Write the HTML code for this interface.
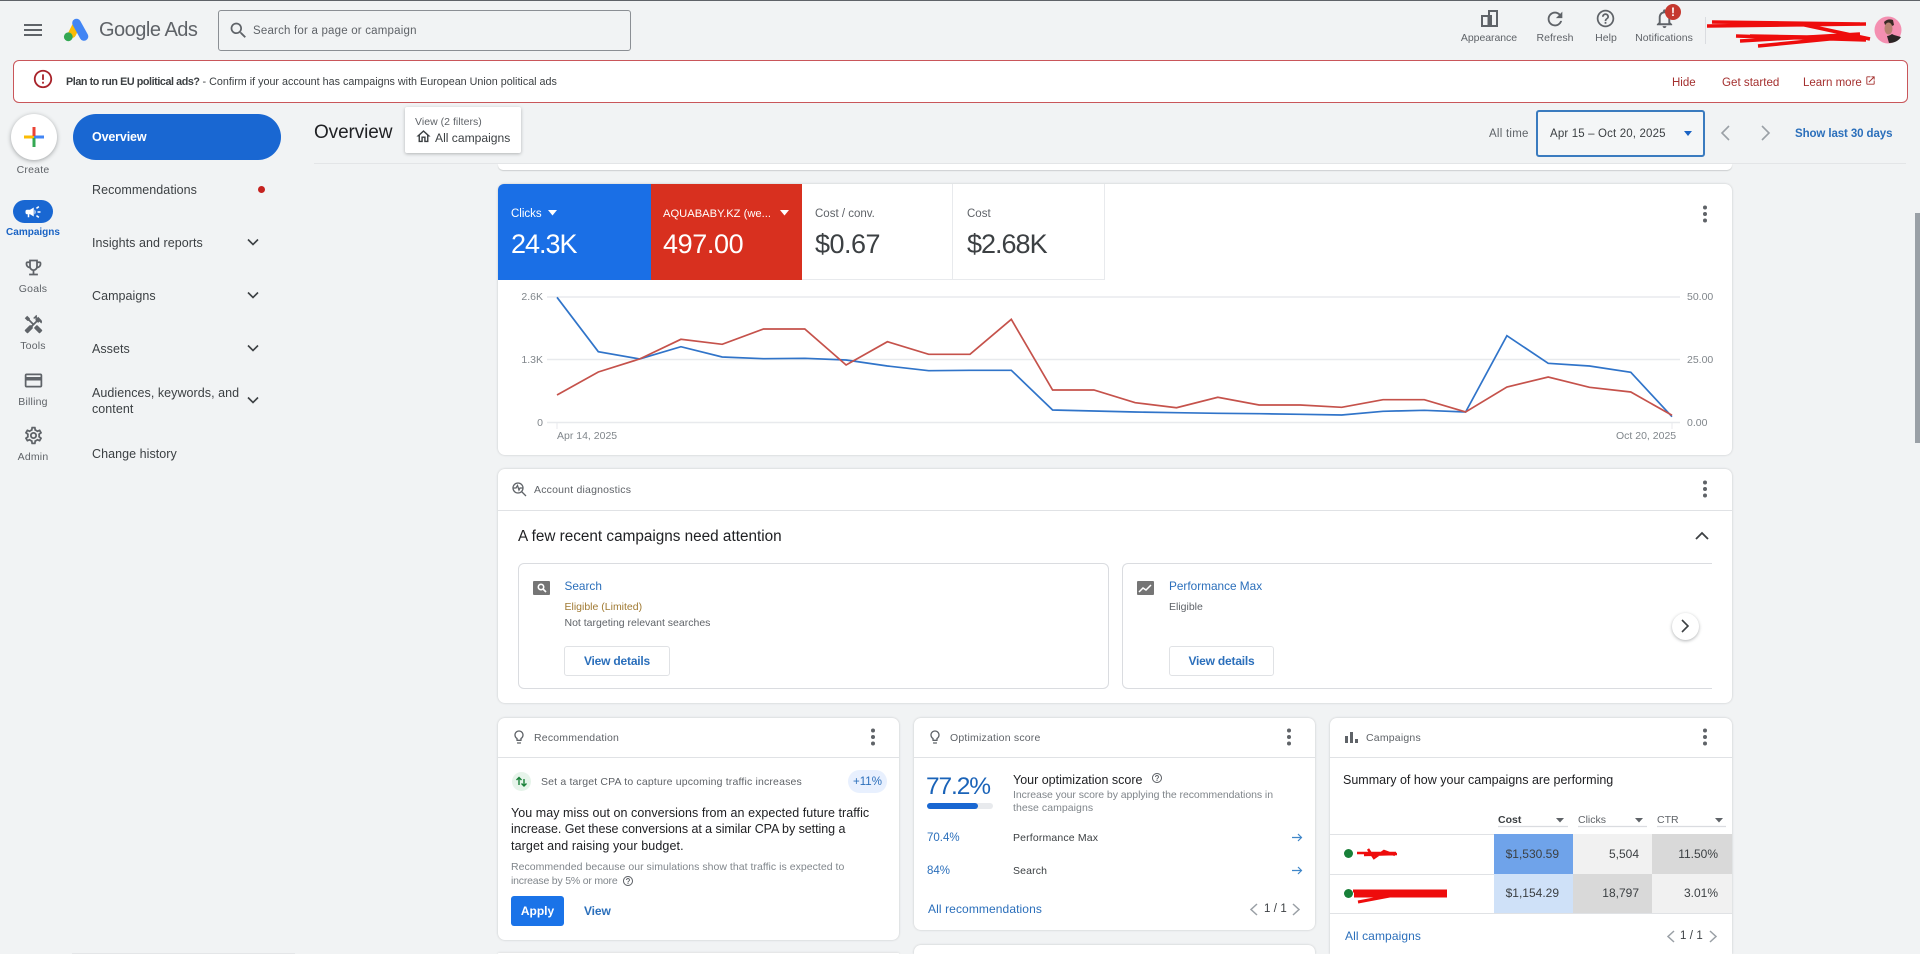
<!DOCTYPE html>
<html><head><meta charset="utf-8"><title>Google Ads</title>
<style>
html,body{margin:0;padding:0;width:1920px;height:954px;overflow:hidden;background:#f1f3f4;font-family:"Liberation Sans",Arial,sans-serif;color:#3c4043}
#w{position:absolute;left:0;top:0;width:1920px;height:954px;overflow:hidden;background:#f1f3f4;filter:blur(.3px)}
.t{position:absolute;white-space:nowrap;height:20px;line-height:20px}
.b{position:absolute;box-sizing:border-box}
svg{position:absolute;overflow:visible}
.card{position:absolute;box-sizing:border-box;background:#fff;border-radius:7px;box-shadow:0 0 2px rgba(60,64,67,.25)}
.rail{font-size:10.5px;color:#5f6368;text-align:center;width:66px;left:0;letter-spacing:.2px;margin-top:1px}
.nav{font-size:12.5px;left:92px;color:#3c4043;letter-spacing:.05px;margin-top:.5px}
.top{font-size:10.5px;color:#5f6368;text-align:center;width:80px;letter-spacing:.05px}
.ax{font-size:10.5px;color:#80868b}
.lbl{font-size:11.5px;color:#5f6368}
.val{font-size:27px;letter-spacing:-1px;height:32px;line-height:32px}
.hd{font-size:10.5px;color:#5f6368;letter-spacing:.2px;margin-top:.5px}
.cell{position:absolute;box-sizing:border-box;text-align:right;font-size:12px;color:#3c4043;height:40px;line-height:40px}
.lnk{color:#2b6fbb}
</style></head><body><div id="w">
<div class="b" style="left:0;top:0;width:1920px;height:1px;background:#5f6368"></div>

<!-- header -->
<svg style="left:21px;top:18px" width="24" height="24" viewBox="0 0 24 24" fill="#5f6368"><path d="M3 18h18v-2H3v2zm0-5h18v-2H3v2zm0-7v2h18V6H3z"/></svg>
<svg style="left:0;top:0" width="100" height="50" fill="none" stroke-linecap="round">
<path d="M72 34 L76 26" stroke="#fbbc04" stroke-width="8"/>
<circle cx="68.3" cy="36.8" r="4.4" fill="#34a853"/>
<path d="M76.5 23 L84 36.5" stroke="#4285f4" stroke-width="8.6"/>
</svg>
<div class="t" style="left:99px;top:20px;font-size:20px;color:#5f6368;letter-spacing:-.5px">Google Ads</div>
<div class="b" style="left:218px;top:10px;width:413px;height:41px;border:1.5px solid #8b8f94;border-radius:3px"></div>
<svg style="left:228px;top:20px" width="21" height="21" viewBox="0 0 24 24" fill="#5f6368"><path d="M15.5 14h-.79l-.28-.27C15.41 12.59 16 11.11 16 9.5 16 5.91 13.09 3 9.5 3S3 5.91 3 9.5 5.91 16 9.5 16c1.61 0 3.09-.59 4.23-1.57l.27.28v.79l5 4.99L20.49 19l-4.99-5zm-6 0C7.01 14 5 11.99 5 9.5S7.01 5 9.5 5 14 7.01 14 9.5 11.99 14 9.5 14z"/></svg>
<div class="t" style="left:253px;top:21px;font-size:11.5px;color:#5f6368;letter-spacing:.2px">Search for a page or campaign</div>

<svg style="left:1479px;top:8px" width="21" height="21" viewBox="0 0 21 21" fill="none" stroke="#5f6368" stroke-width="2"><rect x="3" y="8" width="6.500" height="10"/><rect x="10" y="3" width="8" height="15"/><rect x="9" y="7" width="4" height="11" fill="#5f6368" stroke="none"/></svg>
<svg style="left:1544px;top:8px" width="22" height="22" viewBox="0 0 24 24" fill="#5f6368"><path d="M17.65 6.35C16.2 4.9 14.21 4 12 4c-4.42 0-7.99 3.58-7.99 8s3.57 8 7.99 8c3.73 0 6.84-2.55 7.73-6h-2.08c-.82 2.33-3.04 4-5.65 4-3.31 0-6-2.69-6-6s2.69-6 6-6c1.66 0 3.14.69 4.22 1.78L13 11h7V4l-2.35 2.35z"/></svg>
<svg style="left:1595px;top:8px" width="21" height="21" viewBox="0 0 24 24" fill="#5f6368"><path d="M11 18h2v-2h-2v2zm1-16C6.48 2 2 6.48 2 12s4.48 10 10 10 10-4.48 10-10S17.52 2 12 2zm0 18c-4.41 0-8-3.59-8-8s3.59-8 8-8 8 3.59 8 8-3.59 8-8 8zm0-14c-2.21 0-4 1.79-4 4h2c0-1.1.9-2 2-2s2 .9 2 2c0 2-3 1.75-3 5h2c0-2.25 3-2.5 3-5 0-2.21-1.79-4-4-4z"/></svg>
<svg style="left:1653px;top:7px" width="23" height="23" viewBox="0 0 24 24" fill="#5f6368"><path d="M12 22c1.1 0 2-.9 2-2h-4c0 1.1.9 2 2 2zm6-6v-5c0-3.07-1.63-5.64-4.5-6.32V4c0-.83-.67-1.5-1.5-1.5s-1.5.67-1.5 1.5v.68C7.64 5.36 6 7.92 6 11v5l-2 2v1h16v-1l-2-2zm-2 1H8v-6c0-2.48 1.51-4.5 4-4.5s4 2.02 4 4.5v6z"/></svg>
<div class="b" style="left:1665px;top:4px;width:16px;height:16px;border-radius:50%;background:#c5392f;color:#fff;font-size:12px;font-weight:bold;text-align:center;line-height:16px">!</div>
<div class="t top" style="left:1449px;top:28px;letter-spacing:-.05px">Appearance</div>
<div class="t top" style="left:1515px;top:28px">Refresh</div>
<div class="t top" style="left:1566px;top:28px">Help</div>
<div class="t top" style="left:1624px;top:28px">Notifications</div>
<div class="b" style="left:1705px;top:17px;width:1px;height:27px;background:#dadce0"></div>
<svg style="left:0;top:0" width="1920" height="60" fill="none" stroke="#ee0c0c" stroke-width="3.500">
<path d="M1707 26 L1866 24 M1712 22 L1860 24 M1800 24 L1870 39 M1736 36 L1866 40 M1740 41 L1860 34 M1758 46 L1850 37 M1750 36 L1866 38" />
</svg>
<svg style="left:1874px;top:16px" width="28" height="28" viewBox="0 0 28 28"><ellipse cx="14" cy="14" rx="13.500" ry="13.500" fill="#f48fb1"/><path d="M13 20 Q15 20 18 18 L20 19 L27 21 Q23 27 15 27 Z" fill="#2b2424"/><path d="M10 6 Q14 2 19 4 L20 9 L18 10 Q14 7 11 9 Z" fill="#3a2a26"/><ellipse cx="14.500" cy="12.500" rx="4" ry="6" fill="#b98272"/></svg>

<!-- banner -->
<div class="b" style="left:13px;top:60px;width:1895px;height:43px;background:#fff;border:1px solid #c9565a;border-radius:6px"></div>
<svg style="left:32px;top:68px" width="22" height="22" viewBox="0 0 24 24" fill="#a8232a"><path d="M11 15h2v2h-2zm0-8h2v6h-2zm.99-5C6.47 2 2 6.48 2 12s4.47 10 9.99 10C17.52 22 22 17.52 22 12S17.52 2 11.99 2zM12 20c-4.42 0-8-3.58-8-8s3.58-8 8-8 8 3.58 8 8-3.58 8-8 8z"/></svg>
<div class="t" style="left:66px;top:71.500px;font-size:10.750px;color:#3c4043"><span style="font-weight:bold;letter-spacing:-.42px">Plan to run EU political ads?</span> - Confirm if your account has campaigns with European Union political ads</div>
<div class="t" style="left:1672px;top:72.500px;font-size:11.500px;color:#a4302f">Hide</div>
<div class="t" style="left:1722px;top:72.500px;font-size:11.600px;color:#a4302f">Get started</div>
<div class="t" style="left:1803px;top:72.500px;font-size:11.500px;color:#a4302f">Learn more</div>
<svg style="left:1865px;top:75px" width="11" height="11" viewBox="0 0 24 24" fill="#a4302f"><path d="M19 19H5V5h7V3H5c-1.11 0-2 .9-2 2v14c0 1.1.89 2 2 2h14c1.1 0 2-.9 2-2v-7h-2v7zM14 3v2h3.59l-9.83 9.83 1.41 1.41L19 6.41V10h2V3h-7z"/></svg>

<!-- rail -->
<div class="b" style="left:11px;top:114px;width:46px;height:46px;border-radius:50%;background:#fff;box-shadow:0 1px 4px rgba(60,64,67,.45)"></div>
<svg style="left:24px;top:127px" width="20" height="20"><rect x="0" y="8.500" width="10" height="3" fill="#fbbc04"/><rect x="10" y="8.500" width="10" height="3" fill="#4285f4"/><rect x="8.500" y="0" width="3" height="9" fill="#ea4335"/><rect x="8.500" y="11" width="3" height="9" fill="#34a853"/></svg>
<div class="t rail" style="top:159px">Create</div>
<div class="b" style="left:13px;top:200px;width:40px;height:23px;border-radius:12px;background:#1967d2"></div>
<svg style="left:24px;top:203px" width="18" height="18" viewBox="0 0 24 24" fill="#fff"><path d="M18 11v2h4v-2h-4zm-2 6.61c.96.71 2.21 1.65 3.2 2.39.4-.53.8-1.07 1.2-1.6-.99-.74-2.24-1.68-3.2-2.4-.4.54-.8 1.08-1.2 1.61zM20.4 5.6c-.4-.53-.8-1.07-1.2-1.6-.99.74-2.24 1.68-3.2 2.4.4.53.8 1.07 1.2 1.6.96-.72 2.21-1.65 3.2-2.4zM4 9c-1.1 0-2 .9-2 2v2c0 1.1.9 2 2 2h1v4h2v-4h1l5 3V6L8 9H4zm11.5 3c0-1.33-.58-2.53-1.5-3.35v6.69c.92-.81 1.5-2.01 1.5-3.34z"/></svg>
<div class="t rail" style="top:222px;color:#1a63c4;font-weight:bold;font-size:10px;letter-spacing:0">Campaigns</div>
<svg style="left:23px;top:257px" width="21" height="21" viewBox="0 0 24 24" fill="#5f6368"><path d="M19 5h-2V3H7v2H5c-1.1 0-2 .9-2 2v1c0 2.55 1.92 4.63 4.39 4.94.63 1.5 1.98 2.63 3.61 2.96V19H7v2h10v-2h-4v-3.1c1.63-.33 2.98-1.46 3.61-2.96C19.08 12.63 21 10.55 21 8V7c0-1.1-.9-2-2-2zM5 8V7h2v3.82C5.84 10.4 5 9.3 5 8zm7 6c-1.65 0-3-1.35-3-3V5h6v6c0 1.65-1.35 3-3 3zm7-6c0 1.3-.84 2.4-2 2.82V7h2v1z"/></svg>
<div class="t rail" style="top:278px">Goals</div>
<svg style="left:23px;top:314px" width="21" height="21" viewBox="0 0 24 24" fill="#5f6368"><path d="M21.67 18.17l-5.3-5.3h-.99l-2.54 2.54v.99l5.3 5.3c.39.39 1.02.39 1.41 0l2.12-2.12c.39-.38.39-1.02 0-1.41zM17.34 10.19l1.41-1.41 2.12 2.12c1.17-1.17 1.17-3.07 0-4.24l-3.54-3.54-1.41 1.41V1.71l-.7-.71-3.54 3.54.71.71h2.83l-1.41 1.41 1.06 1.06-2.89 2.89-4.13-4.13V5.06L4.83 2.04 2 4.87 5.03 7.9h1.41l4.13 4.13-.85.85H7.61l-5.3 5.3c-.39.39-.39 1.02 0 1.41l2.12 2.12c.39.39 1.02.39 1.41 0l5.3-5.3v-2.12l5.15-5.15 1.05 1.05z"/></svg>
<div class="t rail" style="top:335px">Tools</div>
<svg style="left:23px;top:370px" width="21" height="21" viewBox="0 0 24 24" fill="#5f6368"><path d="M20 4H4c-1.11 0-1.99.89-1.99 2L2 18c0 1.11.89 2 2 2h16c1.11 0 2-.89 2-2V6c0-1.11-.89-2-2-2zm0 14H4v-6h16v6zm0-10H4V6h16v2z"/></svg>
<div class="t rail" style="top:391px">Billing</div>
<svg style="left:23px;top:425px" width="21" height="21" viewBox="0 0 24 24" fill="#5f6368"><path d="M19.43 12.98c.04-.32.07-.64.07-.98 0-.34-.03-.66-.07-.98l2.11-1.65c.19-.15.24-.42.12-.64l-2-3.46c-.09-.16-.26-.25-.44-.25-.06 0-.12.01-.17.03l-2.49 1c-.52-.4-1.08-.73-1.69-.98l-.38-2.65C14.46 2.18 14.25 2 14 2h-4c-.25 0-.46.18-.49.42l-.38 2.65c-.61.25-1.17.59-1.69.98l-2.49-1c-.06-.02-.12-.03-.18-.03-.17 0-.34.09-.43.25l-2 3.46c-.13.22-.07.49.12.64l2.11 1.65c-.04.32-.07.65-.07.98 0 .33.03.66.07.98l-2.11 1.65c-.19.15-.24.42-.12.64l2 3.46c.09.16.26.25.44.25.06 0 .12-.01.17-.03l2.49-1c.52.4 1.08.73 1.69.98l.38 2.65c.03.24.24.42.49.42h4c.25 0 .46-.18.49-.42l.38-2.65c.61-.25 1.17-.59 1.69-.98l2.49 1c.06.02.12.03.18.03.17 0 .34-.09.43-.25l2-3.46c.12-.22.07-.49-.12-.64l-2.11-1.65zm-1.98-1.71c.04.31.05.52.05.73 0 .21-.02.43-.05.73l-.14 1.13.89.7 1.08.84-.7 1.21-1.27-.51-1.04-.42-.9.68c-.43.32-.84.56-1.25.73l-1.06.43-.16 1.13-.2 1.35h-1.4l-.19-1.35-.16-1.13-1.06-.43c-.43-.18-.83-.41-1.23-.71l-.91-.7-1.06.43-1.27.51-.7-1.21 1.08-.84.89-.7-.14-1.13c-.03-.31-.05-.54-.05-.74s.02-.43.05-.73l.14-1.13-.89-.7-1.08-.84.7-1.21 1.27.51 1.04.42.9-.68c.43-.32.84-.56 1.25-.73l1.06-.43.16-1.13.2-1.35h1.39l.19 1.35.16 1.13 1.06.43c.43.18.83.41 1.23.71l.91.7 1.06-.43 1.27-.51.7 1.21-1.07.85-.89.7.14 1.13zM12 8c-2.21 0-4 1.79-4 4s1.79 4 4 4 4-1.79 4-4-1.79-4-4-4zm0 6c-1.1 0-2-.9-2-2s.9-2 2-2 2 .9 2 2-.9 2-2 2z"/></svg>
<div class="t rail" style="top:446px">Admin</div>

<!-- nav -->
<div class="b" style="left:73px;top:114px;width:208px;height:46px;border-radius:23px;background:#1967d2"></div>
<div class="t nav" style="top:126px;color:#fff;font-weight:bold;letter-spacing:-.15px">Overview</div>
<div class="t nav" style="top:179px">Recommendations</div>
<div class="b" style="left:258px;top:186px;width:7px;height:7px;border-radius:50%;background:#c5221f"></div>
<div class="t nav" style="top:232px">Insights and reports</div>
<div class="t nav" style="top:285px">Campaigns</div>
<div class="t nav" style="top:338px">Assets</div>
<div class="t nav" style="top:382px">Audiences, keywords, and</div>
<div class="t nav" style="top:398px">content</div>
<div class="t nav" style="top:443px">Change history</div>
<svg style="left:0;top:0" width="300" height="420" fill="none" stroke="#3c4043" stroke-width="1.600"><path d="M248 239.500 L253 244.500 L258 239.500 M248 292.500 L253 297.500 L258 292.500 M248 345.500 L253 350.500 L258 345.500 M248 397.500 L253 402.500 L258 397.500"/></svg>
<div class="b" style="left:72px;top:953px;width:223px;height:1px;background:#e4e6e8"></div>

<!-- overview header -->
<div class="t" style="left:314px;top:123px;font-size:19px;letter-spacing:-.1px;color:#202124">Overview</div>
<div class="b" style="left:314px;top:163px;width:1592px;height:1px;background:#e3e5e7"></div>
<div class="b" style="left:405px;top:107px;width:116px;height:46px;background:#fff;border-radius:2px;box-shadow:0 1px 3px rgba(60,64,67,.35)"></div>
<div class="t" style="left:415px;top:112px;font-size:10.500px;color:#5f6368;letter-spacing:.03px">View (2 filters)</div>
<svg style="left:415px;top:128px" width="17" height="17" viewBox="0 0 24 24" fill="#3c4043"><path d="M12 5.690l5 4.500V18h-2v-6H9v6H7v-7.810l5-4.500M12 3L2 12h3v8h6v-6h2v6h6v-8h3L12 3z"/></svg>
<div class="t" style="left:435px;top:127.500px;font-size:12.100px;color:#3c4043">All campaigns</div>
<div class="t" style="left:1489px;top:123.500px;font-size:11.500px;color:#5f6368;letter-spacing:.25px">All time</div>
<div class="b" style="left:1536px;top:110px;width:169px;height:47px;border:2px solid #3a7bbf;border-radius:3px;background:#f4f6f7"></div>
<div class="t" style="left:1550px;top:123.500px;font-size:11.500px;color:#3c4043;letter-spacing:.15px">Apr 15 – Oct 20, 2025</div>
<svg style="left:1684px;top:131px" width="8" height="5"><path d="M0 0 H8 L4 5 Z" fill="#1a63c4"/></svg>
<svg style="left:0;top:100px" width="1800" height="60" fill="none" stroke="#9aa0a6" stroke-width="1.600"><path d="M1729 26 L1722 33 L1729 40 M1762 26 L1769 33 L1762 40"/></svg>
<div class="t lnk" style="left:1795px;top:123.500px;font-size:11.500px;font-weight:bold;letter-spacing:-.1px">Show last 30 days</div>

<!-- sliver card -->
<div class="b" style="left:498px;top:164px;width:1234px;height:6px;background:#fff;border-radius:0 0 5px 5px;box-shadow:0 1px 1px rgba(60,64,67,.2)"></div>

<!-- chart card -->
<div class="card" style="left:498px;top:184px;width:1234px;height:271px"></div>
<div class="b" style="left:498px;top:184px;width:153px;height:96px;background:#1a6fe6;border-radius:6px 0 0 0"></div>
<div class="b" style="left:651px;top:184px;width:151px;height:96px;background:#d8301f"></div>
<div class="b" style="left:802px;top:184px;width:151px;height:96px;border-right:1px solid #e8eaed;border-bottom:1px solid #e8eaed"></div>
<div class="b" style="left:953px;top:184px;width:152px;height:96px;border-right:1px solid #e8eaed;border-bottom:1px solid #e8eaed"></div>
<div class="t lbl" style="left:511px;top:203.500px;color:#fff">Clicks</div>
<svg style="left:548px;top:210px" width="9" height="6"><path d="M0 0H9L4.500 5.500Z" fill="#fff"/></svg>
<div class="t lbl" style="left:663px;top:203.500px;color:#fff;font-size:11.200px">AQUABABY.KZ (we...</div>
<svg style="left:780px;top:210px" width="9" height="6"><path d="M0 0H9L4.500 5.500Z" fill="#fff"/></svg>
<div class="t lbl" style="left:815px;top:203.500px">Cost / conv.</div>
<div class="t lbl" style="left:967px;top:203.500px">Cost</div>
<div class="t val" style="left:511px;top:228px;color:#fff">24.3K</div>
<div class="t val" style="left:663px;top:228px;color:#fff;letter-spacing:-.4px">497.00</div>
<div class="t val" style="left:815px;top:228px;color:#3c4043;letter-spacing:-.5px">$0.67</div>
<div class="t val" style="left:967px;top:228px;color:#3c4043">$2.68K</div>
<svg style="left:1696px;top:202px" width="18" height="24" fill="#5f6368"><circle cx="9" cy="5.500" r="2"/><circle cx="9" cy="12" r="2"/><circle cx="9" cy="18.500" r="2"/></svg>
<svg style="left:0;top:0" width="1920" height="460" fill="none">
<path d="M547 297H1680M547 359.500H1680M547 422.500H1680" stroke="#e8eaed" stroke-width="1.500"/>
<path d="M557 422V429M1672 422V429" stroke="#e8eaed"/>
<polyline stroke="#3074c9" stroke-width="1.700" points="557,297.300 598.300,351.700 639.600,359 680.900,346.700 722.200,357 763.500,358.700 804.800,358.300 846.100,360 887.400,366 928.700,370.700 970,370.300 1011.300,370.300 1052.600,410 1093.900,411 1135.200,412 1176.500,412.700 1217.800,413.300 1259.100,413.700 1300.400,414.300 1341.700,415 1383,411.300 1424.300,410.300 1465.600,412 1506.900,335.700 1548.200,363.300 1589.500,366 1630.800,372.300 1672,416.700"/>
<polyline stroke="#c5524b" stroke-width="1.700" points="557,395 598.300,372 639.600,359 680.900,339.300 722.200,344.300 763.500,329 804.800,329 846.100,365 887.400,341.700 928.700,354.300 970,354.300 1011.300,319.300 1052.600,390 1093.900,390 1135.200,402.700 1176.500,407.700 1217.800,397.300 1259.100,405 1300.400,405 1341.700,407.300 1383,399.700 1424.300,399.700 1465.600,412 1506.900,387 1548.200,377 1589.500,387.300 1630.800,392 1672,415.300"/>
</svg>
<div class="t ax" style="left:500px;width:43px;text-align:right;top:287px">2.6K</div>
<div class="t ax" style="left:500px;width:43px;text-align:right;top:350px">1.3K</div>
<div class="t ax" style="left:500px;width:43px;text-align:right;top:413px">0</div>
<div class="t ax" style="left:1687px;top:287px">50.00</div>
<div class="t ax" style="left:1687px;top:350px">25.00</div>
<div class="t ax" style="left:1687px;top:413px">0.00</div>
<div class="t ax" style="left:557px;top:426px">Apr 14, 2025</div>
<div class="t ax" style="left:1616px;top:426px">Oct 20, 2025</div>

<!-- scrollbar -->
<div class="b" style="left:1915px;top:213px;width:5px;height:230px;background:#9aa0a6"></div>

<!-- diagnostics -->
<div class="card" style="left:498px;top:469px;width:1234px;height:234px"></div>
<div class="b" style="left:498px;top:510px;width:1234px;height:1px;background:#e0e2e5"></div>
<svg style="left:511px;top:481px" width="16" height="16" viewBox="0 0 16 16" fill="none" stroke="#5f6368" stroke-width="1.300"><circle cx="7" cy="7" r="5"/><path d="M10.500 10.500L15 15M2 7H5L6.500 4.500L8 9L9 7H12"/></svg>
<div class="t hd" style="left:534px;top:479px">Account diagnostics</div>
<svg style="left:1696px;top:477px" width="18" height="24" fill="#5f6368"><circle cx="9" cy="5.500" r="2"/><circle cx="9" cy="12" r="2"/><circle cx="9" cy="18.500" r="2"/></svg>
<div class="t" style="left:518px;top:527px;font-size:15.300px;color:#202124">A few recent campaigns need attention</div>
<svg style="left:1695px;top:531px" width="14" height="10" fill="none" stroke="#3c4043" stroke-width="1.800"><path d="M1 8L7 2L13 8"/></svg>
<div class="b" style="left:518px;top:563px;width:591px;height:126px;border:1px solid #dadce0;border-radius:6px"></div>
<div class="b" style="left:1122px;top:563px;width:590px;height:126px;border:1px solid #dadce0;border-right:0;border-radius:6px 0 0 6px"></div>
<div class="b" style="left:533px;top:581px;width:17px;height:14px;background:#757575;border-radius:1px"></div>
<svg style="left:537px;top:583px" width="10" height="10" fill="none" stroke="#fff" stroke-width="1.600"><circle cx="4" cy="4" r="2.700"/><path d="M6 6L9 9"/></svg>
<div class="b" style="left:1137px;top:581px;width:17px;height:14px;background:#757575;border-radius:1px"></div>
<svg style="left:1137px;top:581px" width="17" height="14" fill="none" stroke="#fff" stroke-width="1.500"><path d="M2 11L6 7L9 9L14 4"/></svg>
<div class="t lnk" style="left:564.500px;top:575.500px;font-size:11.800px">Search</div>
<div class="t lnk" style="left:1169px;top:575.500px;font-size:11.800px">Performance Max</div>
<div class="t" style="left:564.500px;top:596.500px;font-size:10.500px;color:#a07a33">Eligible (Limited)</div>
<div class="t" style="left:1169px;top:596.500px;font-size:10.500px;color:#5f6368">Eligible</div>
<div class="t" style="left:564.500px;top:613px;font-size:10.500px;color:#5f6368">Not targeting relevant searches</div>
<div class="b" style="left:564px;top:646px;width:106px;height:30px;border:1px solid #e0e2e5;border-radius:3px;background:#fff"></div>
<div class="b" style="left:1169px;top:646px;width:105px;height:30px;border:1px solid #e0e2e5;border-radius:3px;background:#fff"></div>
<div class="t lnk" style="left:564px;width:106px;text-align:center;top:651px;font-size:12px;font-weight:bold;letter-spacing:-.2px">View details</div>
<div class="t lnk" style="left:1169px;width:105px;text-align:center;top:651px;font-size:12px;font-weight:bold;letter-spacing:-.2px">View details</div>
<div class="b" style="left:1671.500px;top:612.500px;width:27px;height:27px;border-radius:50%;background:#fff;box-shadow:0 1px 3px rgba(60,64,67,.4)"></div>
<svg style="left:1680px;top:619px" width="10" height="14" fill="none" stroke="#3c4043" stroke-width="1.600"><path d="M2 1L8 7L2 13"/></svg>

<!-- recommendation -->
<div class="card" style="left:498px;top:718px;width:401px;height:222px"></div>
<div class="b" style="left:498px;top:757px;width:401px;height:1px;background:#e0e2e5"></div>
<svg style="left:511px;top:729px" width="16" height="16" viewBox="0 0 24 24" fill="#5f6368"><path d="M9 21c0 .55.45 1 1 1h4c.55 0 1-.45 1-1v-1H9v1zm3-19C8.140 2 5 5.140 5 9c0 2.380 1.190 4.470 3 5.740V17c0 .55.45 1 1 1h6c.55 0 1-.45 1-1v-2.260c1.810-1.270 3-3.360 3-5.740 0-3.860-3.140-7-7-7zm2.850 11.100l-.85.600V16h-4v-2.300l-.85-.600C7.800 12.160 7 10.630 7 9c0-2.760 2.240-5 5-5s5 2.240 5 5c0 1.630-.8 3.160-2.150 4.100z"/></svg>
<div class="t hd" style="left:534px;top:727px">Recommendation</div>
<svg style="left:864px;top:725px" width="18" height="24" fill="#5f6368"><circle cx="9" cy="5.500" r="2"/><circle cx="9" cy="12" r="2"/><circle cx="9" cy="18.500" r="2"/></svg>
<div class="b" style="left:512px;top:772px;width:19px;height:19px;border-radius:50%;background:#e6f4ea"></div>
<svg style="left:512px;top:772px" width="19" height="19" fill="none" stroke-width="1.400"><path d="M7 13V6M4.500 8L7 5.500L9.500 8" stroke="#188038"/><path d="M12 7V14M9.500 11.500L12 14L14.500 11.500" stroke="#188038"/></svg>
<div class="t" style="left:541px;top:771.500px;font-size:10.500px;color:#5f6368;letter-spacing:.17px">Set a target CPA to capture upcoming traffic increases</div>
<div class="b" style="left:848px;top:770px;width:39px;height:23px;border-radius:12px;background:#e8f0fe"></div>
<div class="t" style="left:848px;width:39px;text-align:center;top:771.500px;font-size:11.500px;color:#2b6fbb">+11%</div>
<div class="t" style="left:511px;top:803px;font-size:12.500px;letter-spacing:.05px;color:#202124">You may miss out on conversions from an expected future traffic</div>
<div class="t" style="left:511px;top:819px;font-size:12.500px;letter-spacing:-.05px;color:#202124">increase. Get these conversions at a similar CPA by setting a</div>
<div class="t" style="left:511px;top:836px;font-size:12.500px;letter-spacing:.1px;color:#202124">target and raising your budget.</div>
<div class="t" style="left:511px;top:856.500px;font-size:10.500px;color:#80868b;letter-spacing:.03px">Recommended because our simulations show that traffic is expected to</div>
<div class="t" style="left:511px;top:871px;font-size:10.500px;color:#80868b;letter-spacing:-.2px">increase by 5% or more</div>
<svg style="left:622px;top:875px" width="12" height="12" viewBox="0 0 24 24" fill="#5f6368"><path d="M11 18h2v-2h-2v2zm1-16C6.480 2 2 6.480 2 12s4.480 10 10 10 10-4.480 10-10S17.520 2 12 2zm0 18c-4.410 0-8-3.590-8-8s3.590-8 8-8 8 3.590 8 8-3.590 8-8 8zm0-14c-2.210 0-4 1.790-4 4h2c0-1.100.9-2 2-2s2 .9 2 2c0 2-3 1.750-3 5h2c0-2.250 3-2.500 3-5 0-2.210-1.790-4-4-4z"/></svg>
<div class="b" style="left:511px;top:896px;width:53px;height:30px;border-radius:3px;background:#1a73e8"></div>
<div class="t" style="left:511px;width:53px;text-align:center;top:901px;font-size:12px;font-weight:bold;color:#fff">Apply</div>
<div class="t lnk" style="left:584px;top:901px;font-size:12px;font-weight:bold;letter-spacing:-.1px">View</div>
<div class="card" style="left:498px;top:953px;width:401px;height:1px"></div>

<!-- optimization -->
<div class="card" style="left:914px;top:718px;width:401px;height:212px"></div>
<div class="b" style="left:914px;top:757px;width:401px;height:1px;background:#e0e2e5"></div>
<svg style="left:927px;top:729px" width="16" height="16" viewBox="0 0 24 24" fill="#5f6368"><path d="M9 21c0 .55.45 1 1 1h4c.55 0 1-.45 1-1v-1H9v1zm3-19C8.140 2 5 5.140 5 9c0 2.380 1.190 4.470 3 5.740V17c0 .55.45 1 1 1h6c.55 0 1-.45 1-1v-2.260c1.810-1.270 3-3.360 3-5.740 0-3.860-3.140-7-7-7zm2.850 11.100l-.85.600V16h-4v-2.300l-.85-.600C7.800 12.160 7 10.630 7 9c0-2.760 2.240-5 5-5s5 2.240 5 5c0 1.630-.8 3.160-2.150 4.100z"/></svg>
<div class="t hd" style="left:950px;top:727px">Optimization score</div>
<svg style="left:1280px;top:725px" width="18" height="24" fill="#5f6368"><circle cx="9" cy="5.500" r="2"/><circle cx="9" cy="12" r="2"/><circle cx="9" cy="18.500" r="2"/></svg>
<div class="t" style="left:926px;top:777px;font-size:24.500px;letter-spacing:-1.100px;color:#1a63b8">77.2%</div>
<div class="b" style="left:927px;top:803px;width:66px;height:6px;border-radius:3px;background:#e8eaed"></div>
<div class="b" style="left:927px;top:803px;width:51px;height:6px;border-radius:3px;background:#1967d2"></div>
<div class="t" style="left:1013px;top:770px;font-size:12.500px;color:#202124">Your optimization score</div>
<svg style="left:1151px;top:772px" width="12" height="12" viewBox="0 0 24 24" fill="#5f6368"><path d="M11 18h2v-2h-2v2zm1-16C6.480 2 2 6.480 2 12s4.480 10 10 10 10-4.480 10-10S17.520 2 12 2zm0 18c-4.410 0-8-3.590-8-8s3.590-8 8-8 8 3.590 8 8-3.590 8-8 8zm0-14c-2.210 0-4 1.790-4 4h2c0-1.100.9-2 2-2s2 .9 2 2c0 2-3 1.750-3 5h2c0-2.250 3-2.500 3-5 0-2.210-1.790-4-4-4z"/></svg>
<div class="t" style="left:1013px;top:785px;font-size:10.500px;color:#80868b;letter-spacing:-.06px">Increase your score by applying the recommendations in</div>
<div class="t" style="left:1013px;top:797.500px;font-size:10.500px;color:#80868b;letter-spacing:.05px">these campaigns</div>
<div class="t lnk" style="left:927px;top:828px;font-size:11.500px">70.4%</div>
<div class="t" style="left:1013px;top:828px;font-size:10.500px;color:#3c4043;letter-spacing:.15px">Performance Max</div>
<div class="t lnk" style="left:927px;top:861px;font-size:11.500px">84%</div>
<div class="t" style="left:1013px;top:861px;font-size:10.500px;color:#3c4043;letter-spacing:.15px">Search</div>
<svg style="left:0;top:820px" width="1320" height="60" fill="none" stroke="#3f86c9" stroke-width="1.200"><path d="M1292 17.500H1301.500M1298 14L1301.500 17.500L1298 21M1292 50.500H1301.500M1298 47L1301.500 50.500L1298 54"/></svg>
<div class="t lnk" style="left:928px;top:899px;font-size:12px;letter-spacing:.1px">All recommendations</div>
<div class="t" style="left:1264px;top:899px;font-size:11.500px;color:#3c4043;letter-spacing:.1px">1 / 1</div>
<svg style="left:0;top:895px" width="1920" height="30" fill="none" stroke="#9aa0a6" stroke-width="1.500"><path d="M1257 9L1251 14.500L1257 20M1293 9L1299 14.500L1293 20"/></svg>
<div class="card" style="left:914px;top:945px;width:401px;height:9px;border-radius:7px 7px 0 0"></div>

<!-- campaigns -->
<div class="card" style="left:1330px;top:718px;width:402px;height:236px;border-radius:7px 7px 0 0"></div>
<div class="b" style="left:1330px;top:757px;width:402px;height:1px;background:#e0e2e5"></div>
<svg style="left:1345px;top:732px" width="13" height="11" fill="#5f6368"><rect x="0" y="4" width="3" height="7"/><rect x="5" y="0" width="3" height="11"/><rect x="10" y="7" width="3" height="4"/></svg>
<div class="t hd" style="left:1366px;top:727px">Campaigns</div>
<svg style="left:1696px;top:725px" width="18" height="24" fill="#5f6368"><circle cx="9" cy="5.500" r="2"/><circle cx="9" cy="12" r="2"/><circle cx="9" cy="18.500" r="2"/></svg>
<div class="t" style="left:1343px;top:770px;font-size:12.500px;color:#202124">Summary of how your campaigns are performing</div>
<div class="t" style="left:1498px;top:810px;font-size:10.500px;font-weight:bold;color:#3c4043">Cost</div>
<div class="t" style="left:1578px;top:810px;font-size:10.500px;color:#5f6368">Clicks</div>
<div class="t" style="left:1657px;top:810px;font-size:10.500px;color:#5f6368">CTR</div>
<svg style="left:0;top:815px" width="1920" height="15" fill="#5f6368"><path d="M1556 3H1564L1560 7.500ZM1635 3H1643L1639 7.500ZM1715 3H1723L1719 7.500Z"/><path d="M1498 11.500H1568M1578 11.500H1647M1657 11.500H1726" stroke="#dadce0" stroke-width="1.300"/></svg>
<div class="b" style="left:1330px;top:834px;width:402px;height:1px;background:#e0e2e5"></div>
<div class="b" style="left:1330px;top:874px;width:402px;height:1px;background:#e0e2e5"></div>
<div class="b" style="left:1330px;top:913px;width:402px;height:1px;background:#e0e2e5"></div>
<div class="cell" style="left:1494px;top:834px;width:79px;background:#6fa3ea;padding-right:14px">$1,530.59</div>
<div class="cell" style="left:1573px;top:834px;width:79px;background:#f1f1f1;padding-right:13px">5,504</div>
<div class="cell" style="left:1652px;top:834px;width:80px;background:#d9d9d9;padding-right:14px">11.50%</div>
<div class="cell" style="left:1494px;top:874px;width:79px;height:39px;line-height:39px;background:#cfe1f8;padding-right:14px">$1,154.29</div>
<div class="cell" style="left:1573px;top:874px;width:79px;height:39px;line-height:39px;background:#d9d9d9;padding-right:13px">18,797</div>
<div class="cell" style="left:1652px;top:874px;width:80px;height:39px;line-height:39px;background:#f1f1f1;padding-right:14px">3.01%</div>
<div class="b" style="left:1344px;top:849px;width:9px;height:9px;border-radius:50%;background:#188038"></div>
<div class="b" style="left:1344px;top:889px;width:9px;height:9px;border-radius:50%;background:#188038"></div>
<svg style="left:0;top:840px" width="1920" height="70" fill="none" stroke="#ee0c0c" stroke-width="2.500"><path d="M1357 13H1396M1364 15L1397 14M1368 9L1374 18L1384 11L1395 15"/><path d="M1353 51H1447M1354 53H1447M1354 56H1447M1358 62L1395 55" stroke-width="3"/></svg>
<div class="t lnk" style="left:1345px;top:926px;font-size:12px;letter-spacing:.1px">All campaigns</div>
<div class="t" style="left:1680px;top:926px;font-size:11.500px;color:#3c4043;letter-spacing:.1px">1 / 1</div>
<svg style="left:0;top:922px" width="1920" height="30" fill="none" stroke="#9aa0a6" stroke-width="1.500"><path d="M1674 9L1668 14.500L1674 20M1710 9L1716 14.500L1710 20"/></svg>
</div></body></html>
